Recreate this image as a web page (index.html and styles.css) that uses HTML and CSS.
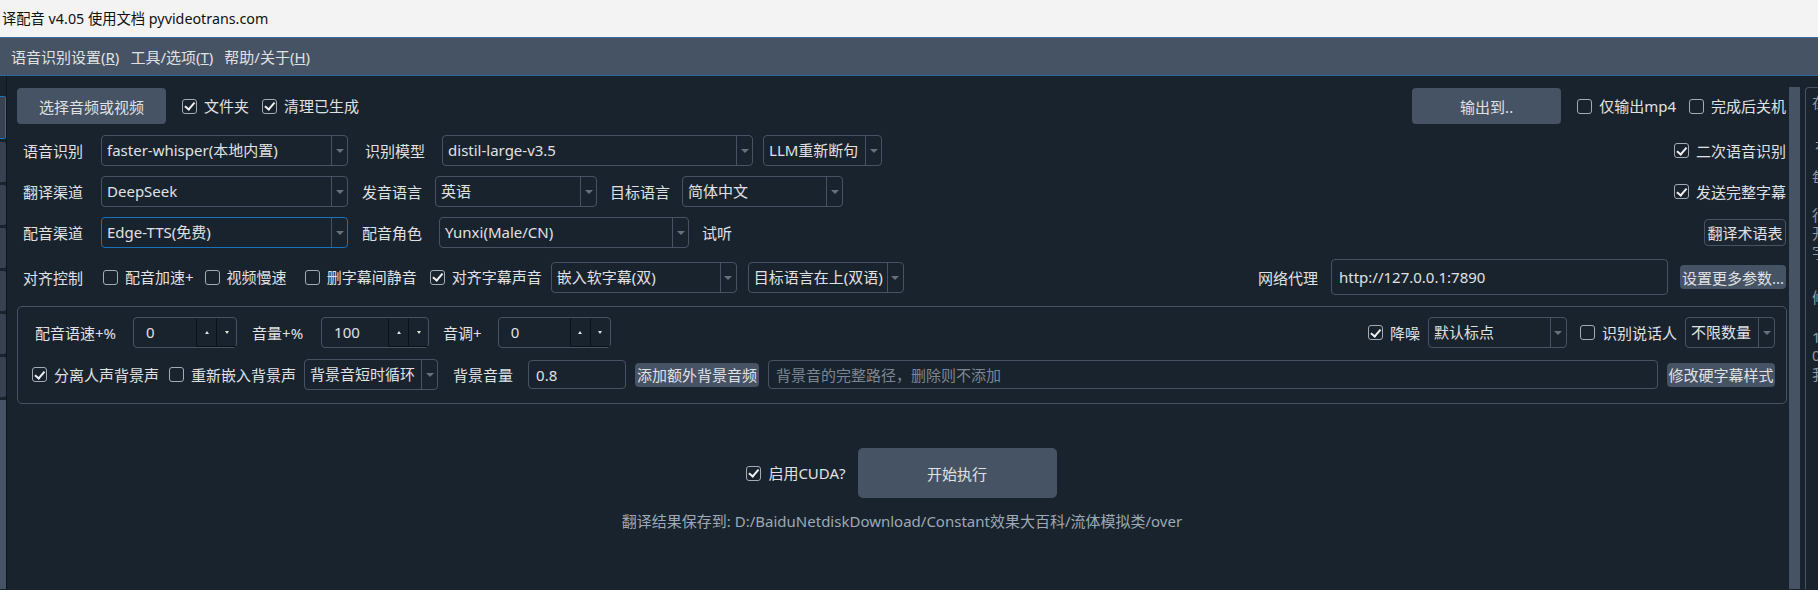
FILE: index.html
```html
<!DOCTYPE html>
<html lang="zh-CN">
<head>
    <meta charset="UTF-8">
    <title>译配音 v4.05 使用文档 pyvideotrans.com</title>
    <link rel="stylesheet" href="styles.css">
</head>
<body>
    <div class="titlebar">译配音 v4.05 使用文档 pyvideotrans.com</div>
    <div class="menubar">
        <span>语音识别设置(<u>R</u>)</span>
        <span>工具/选项(<u>T</u>)</span>
        <span>帮助/关于(<u>H</u>)</span>
    </div>

    <div class="main">
        <!-- 左侧折叠的标签栏 -->
        <div class="tabs">
            <div class="tab active"></div>
            <div class="tab"></div>
            <div class="tab"></div>
            <div class="tab"></div>
            <div class="tab"></div>
            <div class="tab"></div>
            <div class="tab"></div>
            <div class="tabs-rest"></div>
        </div>

        <div class="content">
            <!-- 选择文件 / 输出 -->
            <div class="row row-1">
                <button class="btn btn-big">选择音频或视频</button>
                <label class="check on ml16"><span class="box"></span>文件夹</label>
                <label class="check on ml13"><span class="box"></span>清理已生成</label>
                <button class="btn btn-big push">输出到..</button>
                <label class="check ml16"><span class="box"></span>仅输出mp4</label>
                <label class="check ml13"><span class="box"></span>完成后关机</label>
            </div>

            <!-- 语音识别 -->
            <div class="row row-2">
                <span class="lead">语音识别</span>
                <div class="combo w247 ml18"><span>faster-whisper(本地内置)</span><i></i></div>
                <span class="ml17">识别模型</span>
                <div class="combo w311 ml17"><span>distil-large-v3.5</span><i></i></div>
                <div class="combo w119 ml10"><span>LLM重新断句</span><i></i></div>
                <label class="check on push"><span class="box"></span>二次语音识别</label>
            </div>

            <!-- 翻译 -->
            <div class="row row-3">
                <span class="lead">翻译渠道</span>
                <div class="combo w247 ml18"><span>DeepSeek</span><i></i></div>
                <span class="ml14">发音语言</span>
                <div class="combo w162 ml13"><span>英语</span><i></i></div>
                <span class="ml13">目标语言</span>
                <div class="combo w161 ml12"><span>简体中文</span><i></i></div>
                <label class="check on push"><span class="box"></span>发送完整字幕</label>
            </div>

            <!-- 配音 -->
            <div class="row row-4">
                <span class="lead">配音渠道</span>
                <div class="combo focus w247 ml18"><span>Edge-TTS(免费)</span><i></i></div>
                <span class="ml14">配音角色</span>
                <div class="combo w250 ml17"><span>Yunxi(Male/CN)</span><i></i></div>
                <span class="ml13">试听</span>
                <button class="btn btn-outline push">翻译术语表</button>
            </div>

            <!-- 对齐 / 代理 -->
            <div class="row row-5">
                <span class="lead">对齐控制</span>
                <label class="check ml20"><span class="box"></span>配音加速+</label>
                <label class="check ml11"><span class="box"></span>视频慢速</label>
                <label class="check ml18"><span class="box"></span>删字幕间静音</label>
                <label class="check on ml13"><span class="box"></span>对齐字幕声音</label>
                <div class="combo w186 ml9"><span>嵌入软字幕(双)</span><i></i></div>
                <div class="combo w156 ml11"><span>目标语言在上(双语)</span><i></i></div>
                <span class="push">网络代理</span>
                <input class="field w337 ml13" value="http://127.0.0.1:7890">
                <button class="btn btn-small w106 ml12">设置更多参数...</button>
            </div>

            <!-- 配音参数 -->
            <div class="group">
                <div class="row">
                    <span class="ml3">配音语速+%</span>
                    <div class="spin w104 ml17"><span>0</span><i class="up"></i><i class="down"></i></div>
                    <span class="ml15">音量+%</span>
                    <div class="spin w108 ml18"><span>100</span><i class="up"></i><i class="down"></i></div>
                    <span class="ml14">音调+</span>
                    <div class="spin w113 ml16"><span>0</span><i class="up"></i><i class="down"></i></div>
                    <label class="check on push"><span class="box"></span>降噪</label>
                    <div class="combo w139 ml8"><span>默认标点</span><i></i></div>
                    <label class="check ml13"><span class="box"></span>识别说话人</label>
                    <div class="combo w90 ml8"><span>不限数量</span><i></i></div>
                </div>
                <div class="row">
                    <label class="check on"><span class="box"></span>分离人声背景声</label>
                    <label class="check ml10"><span class="box"></span>重新嵌入背景声</label>
                    <div class="combo w134 ml8"><span>背景音短时循环</span><i></i></div>
                    <span class="ml15">背景音量</span>
                    <input class="field short w98 ml15" value="0.8">
                    <button class="btn btn-small w124 ml9">添加额外背景音频</button>
                    <input class="field short grow ml9" placeholder="背景音的完整路径，删除则不添加">
                    <button class="btn btn-small w108 ml9">修改硬字幕样式</button>
                </div>
            </div>

            <div class="row run-row">
                <label class="check on"><span class="box"></span>启用CUDA?</label>
                <button class="btn btn-run ml12">开始执行</button>
            </div>
            <div class="save-path">翻译结果保存到: D:/BaiduNetdiskDownload/Constant效果大百科/流体模拟类/over</div>
        </div>

        <div class="vbar"></div>

        <!-- 右侧说明面板（被窗口裁掉） -->
        <div class="tips">
            <p>在这里可以查看各项设置的说明</p>
            <p class="in">有问题请查看使用文档</p>
            <p>每个视频处理完成后会打开输出目录</p>
            <p>行内字幕会根据时间轴对齐<br>开启对齐字幕声音后会调整语速<br>字幕文件与视频同名时自动读取</p>
            <p>候选的配音角色可点击试听</p>
            <p>1. 先选择音频或视频<br>0 表示不限制<br>我们建议开启 CUDA 加速</p>
        </div>
    </div>
</body>
</html>
```

FILE: styles.css
```css
body {
    margin: 0;
    width: 1818px;
    height: 590px;
    overflow: hidden;
    background: #19232D;
    color: #E0E1E3;
    font-family: "Noto Sans", "Noto Sans CJK SC", sans-serif;
    font-size: 15px;
}

.titlebar {
    height: 37px;
    line-height: 37px;
    padding-left: 2px;
    background: #f3f3f3;
    color: #111;
    font-size: 14.3px;
    border-bottom: 1px solid #3a6d9c;
    white-space: nowrap;
}

.menubar {
    height: 37px;
    display: flex;
    align-items: center;
    gap: 11px;
    padding-left: 11px;
    background: #455364;
    border-bottom: 1px solid #2f6796;
}

.main {
    display: flex;
    height: 513px;
    overflow: hidden;
}

/* 左边缘的标签 */
.tabs {
    flex: none;
    width: 6px;
    display: flex;
    flex-direction: column;
    gap: 3px;
    padding-top: 20px;
    border-right: 1px solid #0e151c;
}
.tab { height: 40px; background: #37414F; border-radius: 0 2px 2px 0; }
.tab.active { height: 41px; border: 1px solid #1A72BB; border-left: none; }
.tabs-rest { flex: 1; background: #455364; }

.content {
    flex: none;
    width: 1770px;
    padding: 12px 0 0 10px;
}

.vbar {
    flex: none;
    width: 11px;
    margin: 11px 0 0 2px;
    background: #455364;
}

.tips {
    flex: none;
    width: 300px;
    margin: 11px 0 0 5px;
    padding: 5px 6px;
    border: 1px solid #455364;
    border-bottom: none;
    border-radius: 4px 4px 0 0;
    color: #8e99a4;
    white-space: nowrap;
    overflow: hidden;
}
.tips p { margin: 0; line-height: 18.5px; }
.tips p:nth-child(2) { margin-top: 26px; }
.tips p:nth-child(3) { margin-top: 12px; }
.tips p:nth-child(4) { margin-top: 19px; }
.tips p:nth-child(5) { margin-top: 27px; }
.tips p:nth-child(6) { margin-top: 21px; }
.tips .in { padding-left: 3px; }

/* 行 */
.row {
    display: flex;
    align-items: center;
    white-space: nowrap;
    padding-right: 1px;
}
.row-1 { height: 36px; }
.row-2 { height: 31px; margin-top: 11px; }
.row-3 { height: 31px; margin-top: 10px; }
.row-4 { height: 31px; margin-top: 10px; }
.row-5 { height: 36px; margin-top: 11px; }
.lead { margin-left: 6px; }

.group {
    margin-top: 11px;
    padding: 10px 11px 13px 14px;
    border: 1px solid #455364;
    border-radius: 5px;
}
.group .row { height: 31px; padding-right: 0; }
.group .row + .row { margin-top: 11px; }

.run-row { height: 50px; margin-top: 44px; justify-content: center; }

.save-path {
    margin-top: 13px;
    line-height: 20px;
    text-align: center;
    color: #9DA9B5;
}

/* 复选框 */
.check {
    display: inline-flex;
    align-items: center;
    gap: 7px;
    line-height: 20px;
}
.box {
    position: relative;
    width: 15px;
    height: 15px;
    box-sizing: border-box;
    border: 1.5px solid #a3abb4;
    border-radius: 3px;
}
.on .box::after {
    content: "";
    position: absolute;
    left: 4px;
    top: 0.5px;
    width: 3.5px;
    height: 7.5px;
    border: solid #f2f2f2;
    border-width: 0 2px 2px 0;
    transform: rotate(40deg);
}

/* 下拉框 */
.combo {
    display: flex;
    height: 31px;
    box-sizing: border-box;
    border: 1px solid #455364;
    border-radius: 4px;
}
.combo.focus { border-color: #1A72BB; }
.combo span {
    flex: 1;
    padding-left: 5px;
    line-height: 29px;
    overflow: hidden;
}
.combo i {
    width: 15px;
    display: flex;
    align-items: center;
    justify-content: center;
    border-left: 1px solid #455364;
}
.combo i::after {
    content: "";
    border: 4px solid transparent;
    border-top-color: #66717f;
    border-bottom: 0;
    margin-top: 1px;
}

/* 数字框 */
.spin {
    display: flex;
    height: 31px;
    box-sizing: border-box;
    border: 1px solid #455364;
    border-radius: 4px;
}
.spin span { flex: 1; padding-left: 12px; line-height: 29px; }
.spin i {
    width: 20px;
    box-sizing: border-box;
    display: flex;
    align-items: center;
    justify-content: center;
    border-left: 1px solid #0c1116;
    border-bottom: 1px solid #0c1116;
}
.spin .up::after {
    content: "";
    border: 2.5px solid transparent;
    border-bottom: 3px solid #e0e1e3;
    border-top: 0;
}
.spin .down::after {
    content: "";
    border: 2.5px solid transparent;
    border-top: 3px solid #e0e1e3;
    border-bottom: 0;
}

/* 输入框 */
.field {
    height: 36px;
    box-sizing: border-box;
    padding: 0 7px;
    border: 1px solid #455364;
    border-radius: 4px;
    background: #19232D;
    color: #E0E1E3;
    font: inherit;
    outline: none;
}
.field.short { height: 29px; }
.field::placeholder { color: #7b8692; }
.grow { flex: 1; min-width: 0; }

/* 按钮 */
.btn {
    height: 36px;
    padding: 0;
    border: none;
    border-radius: 4px;
    background: #455364;
    color: #E0E1E3;
    font: inherit;
    white-space: nowrap;
}
.btn-big { width: 149px; }
.btn-small { height: 24px; }
.btn-outline {
    width: 82px;
    height: 27px;
    background: #1c2631;
    border: 1px solid #455364;
}
.btn-run { width: 199px; height: 50px; border-radius: 5px; }

/* 宽度 */
.w90 { width: 90px; }
.w98 { width: 98px; }
.w104 { width: 104px; }
.w106 { width: 106px; }
.w108 { width: 108px; }
.w113 { width: 113px; }
.w119 { width: 119px; }
.w124 { width: 124px; }
.w134 { width: 134px; }
.w139 { width: 139px; }
.w156 { width: 156px; }
.w161 { width: 161px; }
.w162 { width: 162px; }
.w186 { width: 186px; }
.w247 { width: 247px; }
.w250 { width: 250px; }
.w311 { width: 311px; }
.w337 { width: 337px; }

/* 间距 */
.ml3 { margin-left: 3px; }
.ml8 { margin-left: 8px; }
.ml9 { margin-left: 9px; }
.ml10 { margin-left: 10px; }
.ml11 { margin-left: 11px; }
.ml12 { margin-left: 12px; }
.ml13 { margin-left: 13px; }
.ml14 { margin-left: 14px; }
.ml15 { margin-left: 15px; }
.ml16 { margin-left: 16px; }
.ml17 { margin-left: 17px; }
.ml18 { margin-left: 18px; }
.ml20 { margin-left: 20px; }
.push { margin-left: auto; }
```
